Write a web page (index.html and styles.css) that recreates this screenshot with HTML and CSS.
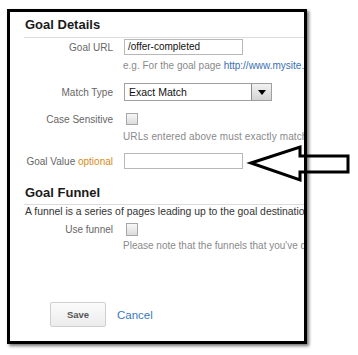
FILE: index.html
```html
<!DOCTYPE html>
<html>
<head>
<meta charset="utf-8">
<link rel="stylesheet" href="styles.css">
</head>
<body>
<div class="frame">
  <h2 class="section-title first">Goal Details</h2>
  <div class="row r-url">
    <label class="lbl">Goal URL</label>
    <div class="textbox">/offer-completed</div>
  </div>
  <div class="hint h-url">e.g. For the goal page <span class="link">http://www.mysite.com/thankyou.html</span></div>
  <div class="row r-match">
    <label class="lbl">Match Type</label>
    <div class="select"><span class="sel-text">Exact Match</span><span class="sel-btn"><span class="tri"></span></span></div>
  </div>
  <div class="row r-case">
    <label class="lbl">Case Sensitive</label>
    <span class="check"></span>
  </div>
  <div class="hint h-case">URLs entered above must exactly match the capitalization of visited URLs.</div>
  <div class="row r-value">
    <label class="lbl">Goal Value <span class="opt">optional</span></label>
    <div class="textbox"></div>
  </div>
  <h2 class="section-title second">Goal Funnel</h2>
  <div class="desc">A funnel is a series of pages leading up to the goal destination.</div>
  <div class="row r-funnel">
    <label class="lbl">Use funnel</label>
    <span class="check big"></span>
  </div>
  <div class="hint h-funnel">Please note that the funnels that you've defined here only apply to the Funnel Visualization Report.</div>
  <div class="actions">
    <button class="btn-save">Save</button>
    <span class="cancel">Cancel</span>
  </div>
</div>
<svg class="arrow" width="358" height="355" viewBox="0 0 358 355">
  <polygon points="251,163 300,147 300,156 348,156 348,172 300,172 300,180" fill="none" stroke="#000" stroke-width="3" stroke-linejoin="miter"/>
</svg>
</body>
</html>
```
FILE: styles.css
```css
html, body {
  margin: 0;
  padding: 0;
  background: #fff;
}
body {
  font-family: "Liberation Sans", Arial, sans-serif;
  width: 358px;
  height: 355px;
  overflow: hidden;
  position: relative;
}
.frame {
  box-sizing: border-box;
  margin: 9px 0 0 7px;
  width: 300px;
  height: 335px;
  border: 3px solid #000;
  box-shadow: 2px 2px 3px rgba(0,0,0,0.55);
  background: #fff;
  overflow: hidden;
  padding-left: 15px;
  white-space: nowrap;
}
.section-title {
  margin: 0 0 0 -1px;
  font-size: 13px;
  font-weight: bold;
  line-height: 16px;
  color: #1a1a1a;
  border-bottom: 1px solid #dcdcdc;
}
.section-title.first {
  padding: 5px 0 4px 1px;
}
.section-title.second {
  margin-top: 16px;
  padding: 0 0 3px 1px;
}
.row {
  display: flex;
  align-items: center;
}
.lbl {
  width: 88px;
  flex: none;
  text-align: right;
  font-size: 10px;
  color: #666;
  margin-right: 11px;
}
.opt {
  color: #d98b1c;
}
.textbox {
  box-sizing: border-box;
  width: 119px;
  height: 16px;
  border: 1px solid #b8b8b8;
  background: #fff;
  font-size: 10px;
  line-height: 14px;
  padding-left: 3px;
  color: #111;
}
.select {
  box-sizing: border-box;
  width: 148px;
  height: 18px;
  border: 1px solid #a0a0a0;
  display: flex;
  align-items: center;
  background: #fff;
}
.sel-text {
  flex: 1;
  font-size: 10.5px;
  padding-left: 4px;
  color: #111;
}
.sel-btn {
  box-sizing: border-box;
  width: 20px;
  height: 16px;
  border-left: 1px solid #8a8a8a;
  background: linear-gradient(#f2f2f2, #d4d4d4);
  display: flex;
  align-items: center;
  justify-content: center;
}
.tri {
  width: 0;
  height: 0;
  border-left: 4px solid transparent;
  border-right: 4px solid transparent;
  border-top: 5px solid #000;
}
.check {
  box-sizing: border-box;
  width: 12px;
  height: 12px;
  margin-left: 2px;
  border: 1px solid #a6a6a6;
  background: linear-gradient(#f7f7f7, #dcdcdc);
}
.check.big {
  height: 13px;
}
.hint {
  font-size: 10px;
  line-height: 12px;
  color: #8a8a8a;
  padding-left: 98px;
}
.h-case {
  letter-spacing: 0.12px;
}
.link {
  color: #3a6fb5;
}
.desc {
  margin-top: 1px;
  font-size: 10.4px;
  line-height: 12px;
  color: #333;
}
.r-url { margin-top: 1px; height: 16px; }
.h-url { margin-top: 5px; }
.r-match { margin-top: 11px; height: 18px; }
.r-case { margin-top: 12px; height: 12px; }
.h-case { margin-top: 6px; }
.r-value { margin-top: 10px; height: 16px; }
.r-funnel { margin-top: 5px; height: 13px; }
.h-funnel { margin-top: 4px; }
.actions {
  margin-top: 50px;
  margin-left: 25px;
  display: flex;
  align-items: center;
}
.btn-save {
  box-sizing: border-box;
  width: 56px;
  height: 25px;
  border: 1px solid #cfcfcf;
  border-radius: 2px;
  background: linear-gradient(#fbfbfb, #ececec);
  font-family: "Liberation Sans", Arial, sans-serif;
  font-size: 9.5px;
  font-weight: bold;
  color: #555;
  padding: 0;
}
.cancel {
  margin-left: 11px;
  font-size: 11.5px;
  color: #3a78c2;
}
.arrow {
  position: absolute;
  left: 0;
  top: 0;
  pointer-events: none;
}
```
